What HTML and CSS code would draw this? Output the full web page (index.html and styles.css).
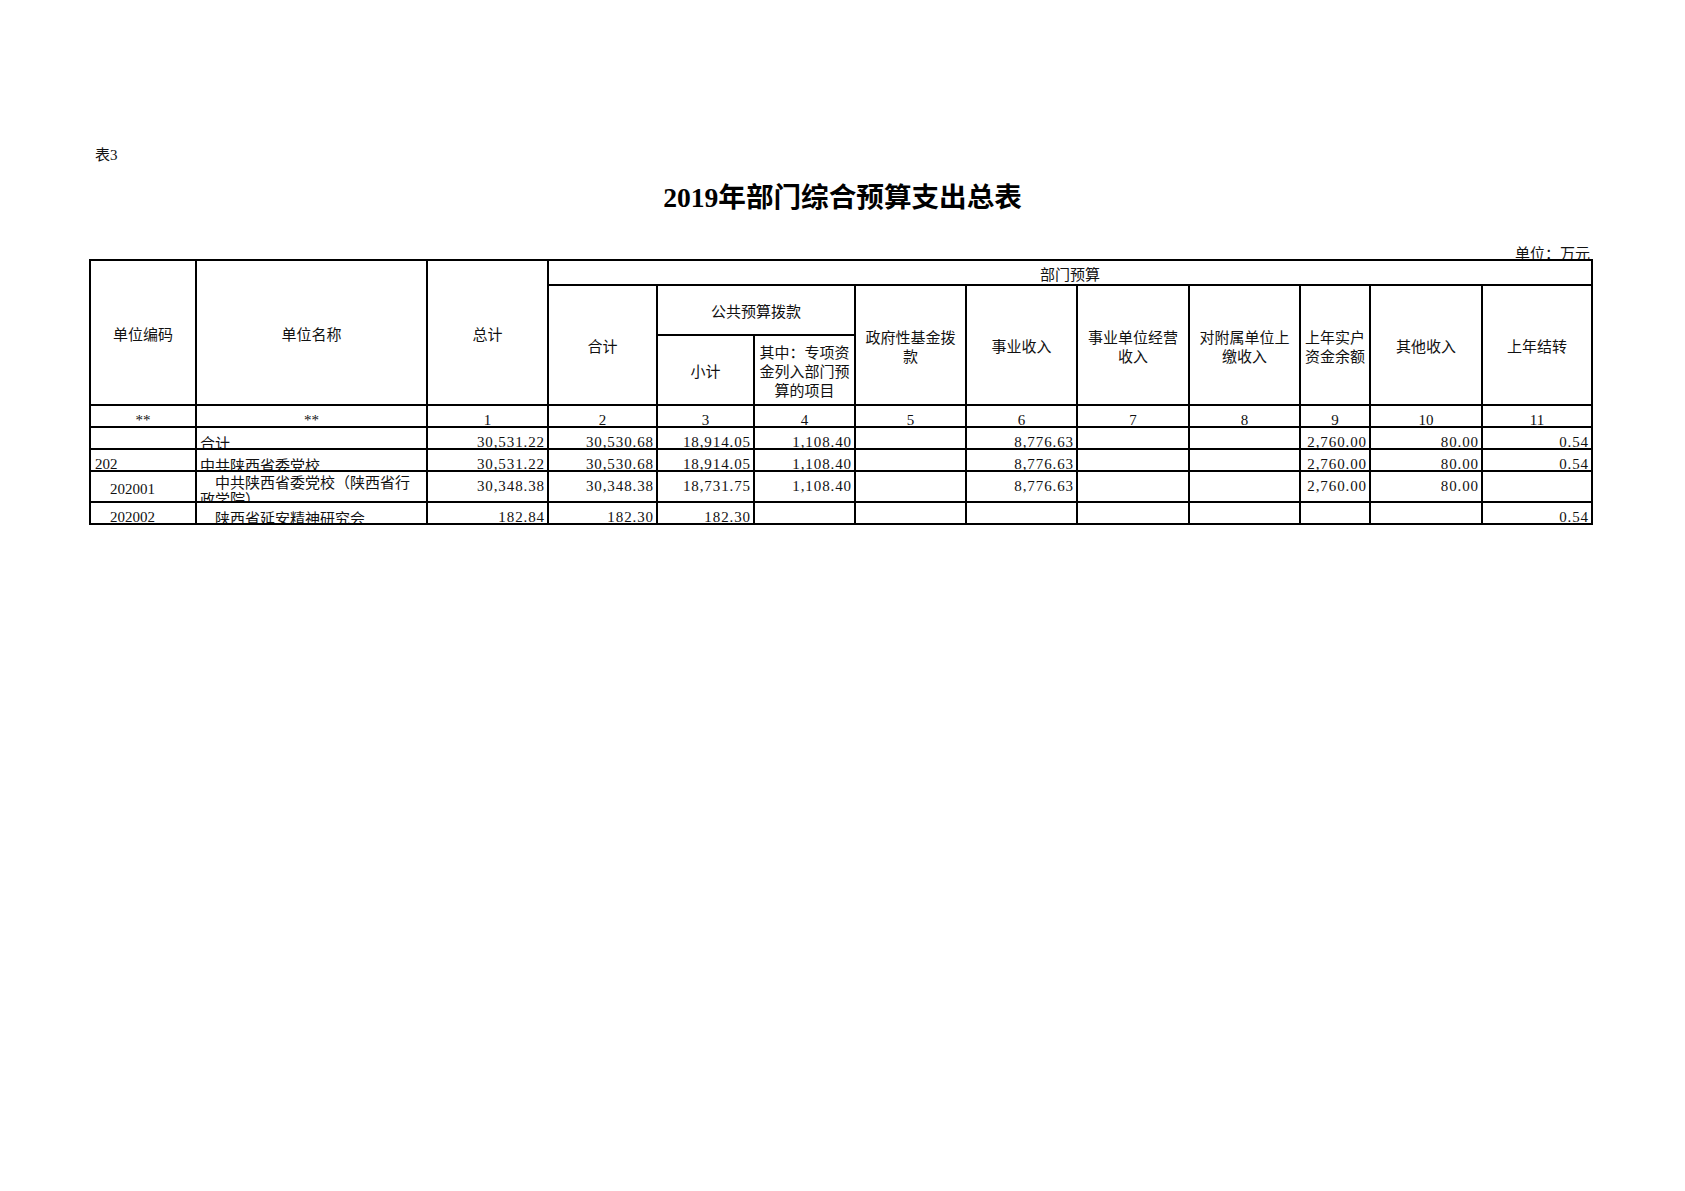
FILE: index.html
```html
<!DOCTYPE html>
<html lang="zh-CN">
<head>
<meta charset="utf-8">
<title>2019年部门综合预算支出总表</title>
<link rel="stylesheet" href="styles.css">
</head>
<body>
<div class="page">
  <div class="label">表3</div>
  <div class="title">2019年部门综合预算支出总表</div>
  <div class="unit">单位：万元</div>
  <div class="grid">
    <div class="c h r3"><span>单位编码</span></div>
    <div class="c h r3"><span>单位名称</span></div>
    <div class="c h r3"><span>总计</span></div>
    <div class="c h c10"><span>部门预算</span></div>

    <div class="c h r2"><span>合计</span></div>
    <div class="c h c2"><span>公共预算拨款</span></div>
    <div class="c h r2"><span>政府性基金拨<br>款</span></div>
    <div class="c h r2"><span>事业收入</span></div>
    <div class="c h r2"><span>事业单位经营<br>收入</span></div>
    <div class="c h r2"><span>对附属单位上<br>缴收入</span></div>
    <div class="c h r2"><span>上年实户<br>资金余额</span></div>
    <div class="c h r2"><span>其他收入</span></div>
    <div class="c h r2"><span>上年结转</span></div>

    <div class="c h"><span>小计</span></div>
    <div class="c h"><span>其中：专项资<br>金列入部门预<br>算的项目</span></div>

    <div class="c n"><span>**</span></div>
    <div class="c n"><span>**</span></div>
    <div class="c n"><span>1</span></div>
    <div class="c n"><span>2</span></div>
    <div class="c n"><span>3</span></div>
    <div class="c n"><span>4</span></div>
    <div class="c n"><span>5</span></div>
    <div class="c n"><span>6</span></div>
    <div class="c n"><span>7</span></div>
    <div class="c n"><span>8</span></div>
    <div class="c n"><span>9</span></div>
    <div class="c n"><span>10</span></div>
    <div class="c n"><span>11</span></div>

    <div class="c d code"></div>
    <div class="c d name"><span>合计</span></div>
    <div class="c d num"><span>30,531.22</span></div>
    <div class="c d num"><span>30,530.68</span></div>
    <div class="c d num"><span>18,914.05</span></div>
    <div class="c d num"><span>1,108.40</span></div>
    <div class="c d num"></div>
    <div class="c d num"><span>8,776.63</span></div>
    <div class="c d num"></div>
    <div class="c d num"></div>
    <div class="c d num"><span>2,760.00</span></div>
    <div class="c d num"><span>80.00</span></div>
    <div class="c d num"><span>0.54</span></div>

    <div class="c d code"><span>202</span></div>
    <div class="c d name"><span>中共陕西省委党校</span></div>
    <div class="c d num"><span>30,531.22</span></div>
    <div class="c d num"><span>30,530.68</span></div>
    <div class="c d num"><span>18,914.05</span></div>
    <div class="c d num"><span>1,108.40</span></div>
    <div class="c d num"></div>
    <div class="c d num"><span>8,776.63</span></div>
    <div class="c d num"></div>
    <div class="c d num"></div>
    <div class="c d num"><span>2,760.00</span></div>
    <div class="c d num"><span>80.00</span></div>
    <div class="c d num"><span>0.54</span></div>

    <div class="c m code ind low"><span>202001</span></div>
    <div class="c wrap name"><span>中共陕西省委党校（陕西省行<br>政学院）</span></div>
    <div class="c m num"><span>30,348.38</span></div>
    <div class="c m num"><span>30,348.38</span></div>
    <div class="c m num"><span>18,731.75</span></div>
    <div class="c m num"><span>1,108.40</span></div>
    <div class="c m num"></div>
    <div class="c m num"><span>8,776.63</span></div>
    <div class="c m num"></div>
    <div class="c m num"></div>
    <div class="c m num"><span>2,760.00</span></div>
    <div class="c m num"><span>80.00</span></div>
    <div class="c m num"></div>

    <div class="c d code ind"><span>202002</span></div>
    <div class="c d name ind"><span>陕西省延安精神研究会</span></div>
    <div class="c d num"><span>182.84</span></div>
    <div class="c d num"><span>182.30</span></div>
    <div class="c d num"><span>182.30</span></div>
    <div class="c d num"></div>
    <div class="c d num"></div>
    <div class="c d num"></div>
    <div class="c d num"></div>
    <div class="c d num"></div>
    <div class="c d num"></div>
    <div class="c d num"></div>
    <div class="c d num"><span>0.54</span></div>
  </div>
</div>
</body>
</html>
```
FILE: styles.css
```css
html, body {
  margin: 0;
  padding: 0;
  background: #ffffff;
}

body {
  font-family: "Liberation Serif", "Noto Sans CJK SC", serif;
  color: #111111;
}

.page {
  width: 1685px;
  min-height: 1191px;
  padding-top: 148px;
  box-sizing: border-box;
  display: flex;
  flex-direction: column;
}

.label {
  margin-left: 95px;
  font-size: 15px;
  line-height: 15px;
}

.title {
  margin-top: 21px;
  text-align: center;
  font-size: 27.6px;
  line-height: 28px;
  font-weight: 700;
  color: #000000;
}

.unit {
  margin-top: 36px;
  margin-bottom: -1px;
  margin-left: 89px;
  width: 1504px;
  box-sizing: border-box;
  padding-right: 3px;
  text-align: right;
  font-size: 15px;
  line-height: 12px;
}

.grid {
  align-self: flex-start;
  margin-left: 89px;
  display: grid;
  grid-template-columns: 104px 229px 119px 107px 95px 99px 109px 109px 110px 109px 68px 110px 108px;
  grid-template-rows: 23px 48px 68px 20px 20px 20px 29px 20px;
  gap: 2px;
  padding: 2px;
  background: #000000;
}

.c {
  background: #ffffff;
  font-size: 15px;
  overflow: hidden;
  display: flex;
  min-width: 0;
  box-sizing: border-box;
}

.r3 { grid-row: span 3; }
.r2 { grid-row: span 2; }
.c10 { grid-column: span 10; }
.c2 { grid-column: span 2; }

.h {
  justify-content: center;
  align-items: center;
  text-align: center;
  line-height: 19px;
  padding-top: 5px;
  overflow: visible;
}

.h span {
  white-space: nowrap;
}

.n {
  justify-content: center;
  align-items: flex-end;
}

.d {
  align-items: flex-end;
}

.m {
  align-items: center;
}

.n span,
.d span {
  line-height: 12px;
  white-space: nowrap;
}

.d.name span {
  line-height: 15px;
  margin-bottom: -4px;
}

.m span {
  line-height: 15px;
  white-space: nowrap;
}

.num {
  justify-content: flex-end;
  padding-right: 2px;
  letter-spacing: 0.9px;
}

.code {
  justify-content: flex-start;
  padding-left: 4px;
}

.name {
  justify-content: flex-start;
  padding-left: 3px;
}

.code.ind {
  padding-left: 19px;
}

.name.ind {
  padding-left: 18px;
}

.low {
  padding-top: 6px;
}

.wrap {
  align-items: flex-start;
  padding-top: 3px;
  padding-right: 3px;
}

.wrap span {
  display: block;
  line-height: 17px;
  text-indent: 15px;
  white-space: nowrap;
}
```
